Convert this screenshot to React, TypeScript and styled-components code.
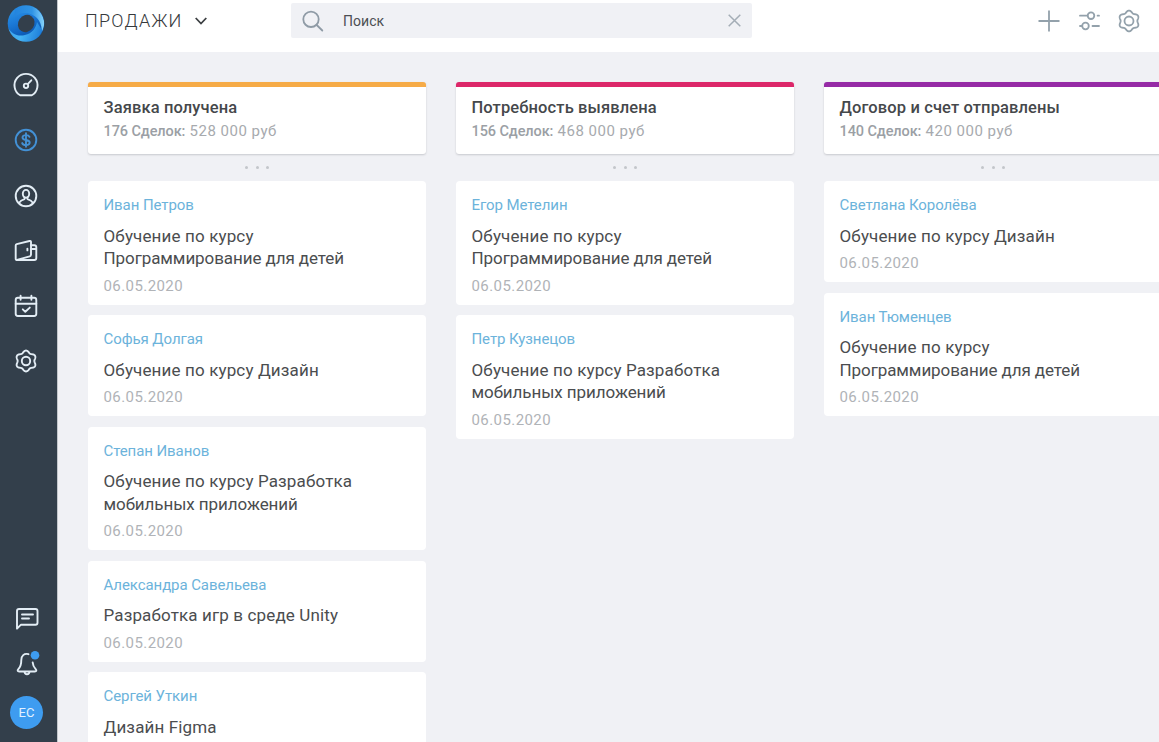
import React from 'react';
import styled, { createGlobalStyle } from 'styled-components';

const GlobalStyle = createGlobalStyle`
  * { box-sizing: border-box; }
  body {
    margin: 0;
    overflow: hidden;
    background: #f0f1f5;
    font-family: Roboto, "Liberation Sans", sans-serif;
    color: #444648;
  }
`;

const Page = styled.div`
  display: flex;
  height: 742px;
  overflow: hidden;
`;

const Sidebar = styled.nav`
  flex: none;
  width: 57.5px;
  padding: 5px 5px 13px 0;
  display: flex;
  flex-direction: column;
  align-items: center;
  background: #333f4b;
  border-right: 0.5px solid #c3c7cc;
`;

const LogoLink = styled.a`
  display: flex;
  height: 37px;
`;

const NavGroup = styled.div`
  display: flex;
  flex-direction: column;
  gap: 27px;
  padding-top: 29.2px;
`;

const FooterGroup = styled.div`
  display: flex;
  flex-direction: column;
  align-items: center;
  margin-top: auto;
  gap: 16.5px;
  padding-left: 1.5px;
`;

const NavItem = styled.a<{ $active?: boolean }>`
  display: flex;
  height: 28.2px;
  align-items: center;
  justify-content: center;
  color: ${(p) => (p.$active ? '#4391d6' : '#e3edf5')};
`;

const Avatar = styled.div`
  width: 33px;
  height: 33px;
  margin-top: 1.5px;
  border-radius: 50%;
  background: #3e9cf0;
  color: #e2f1ff;
  font-size: 13px;
  line-height: 33px;
  text-align: center;
`;

const Main = styled.div`
  flex: 1;
  min-width: 0;
  display: flex;
  flex-direction: column;
`;

const Header = styled.header`
  flex: none;
  display: flex;
  height: 51.5px;
  padding: 3px 18px 0 27.5px;
  background: #fff;
`;

const PageTitle = styled.button`
  display: flex;
  align-items: center;
  gap: 12px;
  width: 206px;
  height: 35px;
  padding: 0;
  border: 0;
  background: none;
  color: #36393c;
  font-family: inherit;
  font-size: 18px;
  font-weight: 300;
  letter-spacing: 1.25px;
`;

const Search = styled.label`
  display: flex;
  align-items: center;
  width: 461px;
  height: 35px;
  padding: 0 11px;
  border-radius: 2px;
  background: #f0f1f5;
  color: #8f9ba6;
`;

const SearchText = styled.span`
  flex: 1;
  padding-left: 19px;
  color: #4c4f53;
  font-size: 14px;
  letter-spacing: 0.05px;
`;

const Tools = styled.div`
  display: flex;
  align-items: center;
  gap: 16.5px;
  height: 35px;
  margin-left: auto;
  color: #93a1ab;
`;

const Board = styled.main`
  flex: 1;
  min-height: 0;
  overflow: hidden;
  display: flex;
  gap: 30px;
  padding: 30.5px 0 0 30.5px;
`;

const Column = styled.section`
  flex: none;
  width: 338px;
`;

const Stage = styled.div<{ $color: string }>`
  height: 71.5px;
  padding: 10px 15.5px 0;
  border-top: 5px solid ${(p) => p.$color};
  border-radius: 3px;
  background: #fff;
  box-shadow: 0 1px 2px rgba(40, 45, 55, 0.2);
`;

const StageName = styled.h2`
  margin: 0;
  color: #45484b;
  font-size: 16.5px;
  font-weight: 500;
  line-height: 22px;
  letter-spacing: 0.12px;
  white-space: nowrap;
`;

const StageTotal = styled.div`
  margin-top: 1px;
  color: #a7aaae;
  font-size: 15px;
  line-height: 22px;
  letter-spacing: 0.5px;
`;

const StageCount = styled.span`
  color: #9b9fa5;
  font-size: 14.5px;
  font-weight: 500;
  letter-spacing: -0.1px;
`;

const Dots = styled.div`
  display: flex;
  align-items: center;
  justify-content: center;
  gap: 7.3px;
  height: 27.5px;
`;

const Dot = styled.i`
  width: 3px;
  height: 3px;
  border-radius: 50%;
  background: #c3c6cb;
`;

const Cards = styled.div`
  display: flex;
  flex-direction: column;
  gap: 10.5px;
`;

const Card = styled.article`
  padding: 14px 15.5px 9px;
  border-radius: 4px;
  background: #fff;
`;

const Client = styled.div`
  color: #6cb3db;
  font-size: 15px;
  line-height: 20px;
  letter-spacing: -0.08px;
`;

const Deal = styled.div`
  margin-top: 9.5px;
  color: #4b4d4f;
  font-size: 17px;
  line-height: 22.5px;
`;

const DealLine = styled.div<{ $tight: boolean }>`
  letter-spacing: ${(p) => (p.$tight ? '-0.08px' : '0.14px')};
`;

const DealDate = styled.div`
  margin-top: 6px;
  color: #b0b3b7;
  font-size: 15px;
  line-height: 20px;
  letter-spacing: 0.42px;
`;

const Logo = () => (
  <svg width="38" height="38" viewBox="0 0 38 38">
    <defs>
      <linearGradient id="ringBase" x1="0.2" y1="0" x2="0.6" y2="1">
        <stop offset="0" stopColor="#2f97e8" />
        <stop offset="0.4" stopColor="#1b7ad8" />
        <stop offset="0.75" stopColor="#0d5cb8" />
        <stop offset="1" stopColor="#1f7ed6" />
      </linearGradient>
      <linearGradient id="ringTop" x1="0" y1="0.4" x2="1" y2="0.4">
        <stop offset="0" stopColor="#2384de" />
        <stop offset="0.6" stopColor="#2f93e4" />
        <stop offset="1" stopColor="#86d3fa" />
      </linearGradient>
      <linearGradient id="ringBottom" x1="0" y1="0.3" x2="1" y2="0.5">
        <stop offset="0" stopColor="#3aa0ee" />
        <stop offset="0.45" stopColor="#46b4f4" />
        <stop offset="1" stopColor="#1d7dda" />
      </linearGradient>
      <mask id="ringMask">
        <circle cx="19" cy="18.500" r="18.300" fill="#fff" />
        <ellipse cx="19.200" cy="18.500" rx="8" ry="9" fill="#000" transform="rotate(35 19.200 18.500)" />
      </mask>
    </defs>
    <g mask="url(#ringMask)">
      <rect width="38" height="38" fill="url(#ringBase)" />
      <path d="M8 3C17-3 34 0 37 16c.5 4-.5 8-2.500 11C36 17 28 7 16 8 12 8.400 9 10 7 12Z" fill="url(#ringTop)" />
      <path d="M0 21c4 8 11 11 18 9 7-1.500 11-7 12-13l5 8c-2 8-10 14-19 13C7 37 1 29 0 21Z" fill="url(#ringBottom)" />
    </g>
  </svg>
);

const Icon = ({ size = 28, stroke = 1.9, children }: { size?: number; stroke?: number; children: React.ReactNode }) => (
  <svg
    width={size}
    height={size}
    viewBox={`0 0 ${size} ${size}`}
    fill="none"
    stroke="currentColor"
    strokeWidth={stroke}
    strokeLinecap="round"
    strokeLinejoin="round"
  >
    {children}
  </svg>
);

const GaugeIcon = () => (
  <Icon>
    <path d="M8.200 24.300A11.500 11.500 0 1 1 19.800 24.300Z" />
    <circle cx="14" cy="14.800" r="2.200" />
    <path d="M15.700 13.100 19.300 9.300" />
  </Icon>
);

const DollarIcon = () => (
  <Icon>
    <circle cx="14" cy="14" r="10.300" />
    <path d="M17.500 10.800c-.5-1.100-1.700-1.700-3.500-1.700-2.200 0-3.500 1-3.500 2.400 0 1.600 1.500 2.100 3.500 2.500s3.700.9 3.700 2.600c0 1.500-1.500 2.500-3.700 2.500-2 0-3.300-.7-3.800-2M14 7.300v13.500" />
  </Icon>
);

const UserIcon = () => (
  <Icon>
    <circle cx="14" cy="14" r="10.300" />
    <ellipse cx="14" cy="11.800" rx="3.200" ry="3.900" />
    <path d="M12.500 15.400v1.700c-2.200.7-4.100 1.400-5 3.200M15.500 15.400v1.700c2.200.7 4.100 1.400 5 3.200" />
  </Icon>
);

const WalletIcon = () => (
  <Icon>
    <path d="M4.700 7.200 17.500 4q1.500-.3 1.500 1v12.600q0 1.300-1.300 1.700L5 22.900q-1.300.2-1.300-1.200V8.500q0-1 1-1.300Z" />
    <path d="M19 8.300h3.300q2 0 2 2V21q0 2-2 2H5M19 12h5M15.400 11.600v1.800" />
  </Icon>
);

const CalendarIcon = () => (
  <Icon>
    <rect x="3.700" y="5.700" width="20.600" height="18.300" rx="2.200" />
    <path d="M3.700 11.800h20.600M8.600 3.800v4M19.400 3.800v4M10.800 17.300l2.500 2.500 4.500-4.200" />
  </Icon>
);

const gearOutline =
  Array.from({ length: 120 }, (_, i) => {
    const a = (i / 120) * Math.PI * 2;
    const r = 9.4 + 1.05 * Math.cos(6 * a);
    return `${i ? 'L' : 'M'}${(14 + r * Math.sin(a)).toFixed(2)} ${(14 - r * Math.cos(a)).toFixed(2)}`;
  }).join('') + 'Z';

const GearIcon = ({ stroke }: { stroke?: number }) => (
  <Icon stroke={stroke}>
    <circle cx="14" cy="14" r="4.200" />
    <path d={gearOutline} />
  </Icon>
);

const ChatIcon = () => (
  <Icon>
    <path d="M4 23.700V6q0-2 2-2h16.500q2 0 2 2v11.700q0 2-2 2H8Z" />
    <path d="M9 9.500h11M9 13.500h7" />
  </Icon>
);

const BellIcon = () => (
  <Icon>
    <path d="M15.500 4.200C11 3 8.300 6 8.300 10c0 4.400-.5 6.500-2.800 8.800-1.400 1.500-1 2.700.7 2.700h15.600c1.700 0 2.100-1.200.7-2.700-1.800-1.800-2.600-3.500-2.800-6.300M11.500 22c.3 3 4.700 3 5 0" />
    <circle cx="22" cy="5.300" r="4.300" fill="#3e9cf0" stroke="none" />
  </Icon>
);

type DealCard = { client: string; lines: string[]; date?: string };
type StageData = { color: string; name: string; count: string; sum: string; cards: DealCard[] };

const date = '06.05.2020';
const kids = ['Обучение по курсу', 'Программирование для детей'];
const mobile = ['Обучение по курсу Разработка', 'мобильных приложений'];
const design = ['Обучение по курсу Дизайн'];

const stages: StageData[] = [
  {
    color: '#f6ab47',
    name: 'Заявка получена',
    count: '176 Сделок:',
    sum: '528 000 руб',
    cards: [
      { client: 'Иван Петров', lines: kids, date },
      { client: 'Софья Долгая', lines: design, date },
      { client: 'Степан Иванов', lines: mobile, date },
      { client: 'Александра Савельева', lines: ['Разработка игр в среде Unity'], date },
      { client: 'Сергей Уткин', lines: ['Дизайн Figma'] },
    ],
  },
  {
    color: '#dc2769',
    name: 'Потребность выявлена',
    count: '156 Сделок:',
    sum: '468 000 руб',
    cards: [
      { client: 'Егор Метелин', lines: kids, date },
      { client: 'Петр Кузнецов', lines: mobile, date },
    ],
  },
  {
    color: '#962ba6',
    name: 'Договор и счет отправлены',
    count: '140 Сделок:',
    sum: '420 000 руб',
    cards: [
      { client: 'Светлана Королёва', lines: design, date },
      { client: 'Иван Тюменцев', lines: kids, date },
    ],
  },
];

export default function App() {
  return (
    <Page>
      <GlobalStyle />
      <Sidebar>
        <LogoLink><Logo /></LogoLink>
        <NavGroup>
          <NavItem><GaugeIcon /></NavItem>
          <NavItem $active><DollarIcon /></NavItem>
          <NavItem><UserIcon /></NavItem>
          <NavItem><WalletIcon /></NavItem>
          <NavItem><CalendarIcon /></NavItem>
          <NavItem><GearIcon /></NavItem>
        </NavGroup>
        <FooterGroup>
          <NavItem><ChatIcon /></NavItem>
          <NavItem><BellIcon /></NavItem>
          <Avatar>ЕС</Avatar>
        </FooterGroup>
      </Sidebar>
      <Main>
        <Header>
          <PageTitle>
            ПРОДАЖИ
            <svg width="12" height="8" viewBox="0 0 12 8" fill="none" stroke="#3c4043" strokeWidth="1.8">
              <path d="M.7 1 6 6.500 11.300 1" />
            </svg>
          </PageTitle>
          <Search>
            <Icon size={22} stroke={1.8}>
              <circle cx="9" cy="9.300" r="7.700" />
              <path d="M14.700 15 20.300 20.500" />
            </Icon>
            <SearchText>Поиск</SearchText>
            <svg width="13" height="13" viewBox="0 0 13 13" stroke="#a4adb6" strokeWidth="1.500">
              <path d="M.7.700l11.600 11.600M12.300.700.700 12.300" />
            </svg>
          </Search>
          <Tools>
            <svg width="22" height="22" viewBox="0 0 22 22" stroke="currentColor" strokeWidth="1.800">
              <path d="M11 .500v21M.500 11h21" />
            </svg>
            <Icon size={24} stroke={1.8}>
              <circle cx="14" cy="6.700" r="3.300" />
              <circle cx="8.500" cy="17" r="3.300" />
              <path d="M3 6.700h7.500M20.600 6.700h1.400M3 17h2M15.500 17h6.500" />
            </Icon>
            <Icon size={24} stroke={1.8}>
              <g transform="translate(-2 -2)">
                <circle cx="14" cy="14" r="4.500" />
                <path d={gearOutline} />
              </g>
            </Icon>
          </Tools>
        </Header>
        <Board>
          {stages.map((s) => (
            <Column key={s.name}>
              <Stage $color={s.color}>
                <StageName>{s.name}</StageName>
                <StageTotal><StageCount>{s.count}</StageCount> {s.sum}</StageTotal>
              </Stage>
              <Dots><Dot /><Dot /><Dot /></Dots>
              <Cards>
                {s.cards.map((card) => (
                  <Card key={card.client}>
                    <Client>{card.client}</Client>
                    <Deal>
                      {card.lines.map((line) => (
                        <DealLine key={line} $tight={/^[Пм]/.test(line)}>{line}</DealLine>
                      ))}
                    </Deal>
                    {card.date && <DealDate>{card.date}</DealDate>}
                  </Card>
                ))}
              </Cards>
            </Column>
          ))}
        </Board>
      </Main>
    </Page>
  );
}
